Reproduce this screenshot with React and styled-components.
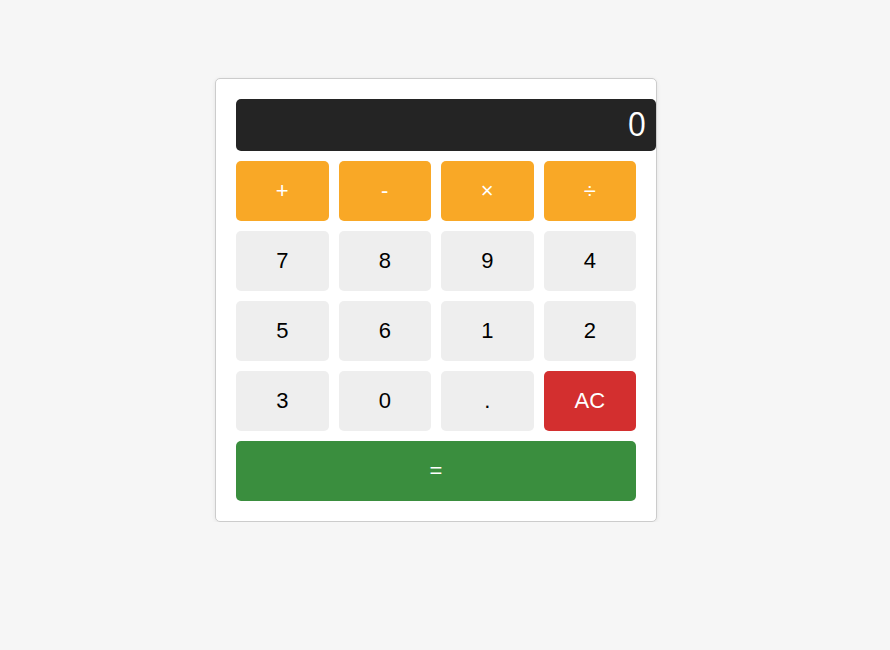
import React from 'react';
import styled, { createGlobalStyle } from "styled-components";

const Global = createGlobalStyle`
body {
  margin: 0;
  background-color: #f6f6f6;
  font-family: "Liberation Sans", Arial, sans-serif;
}
`
const Pagina = styled.div`
padding-top: 78px;
padding-left: 215px;
`
const Calculadora = styled.div`
width: 400px;
padding: 20px;
background-color: white;
border: 1px solid #cccccc;
border-radius: 5px;
box-shadow: 0 1px 4px rgba(0, 0, 0, 0.08);
`
const Visor = styled.div`
width: 100%;
height: 52px;
padding: 0 10px 4px 10px;
box-sizing: content-box;
height: 48px;
background-color: #242424;
color: white;
border-radius: 5px;
display: flex;
align-items: center;
justify-content: flex-end;
font-family: "Open Sans", sans-serif;
font-size: 32px;
margin-bottom: 10px;
`
const Teclado = styled.div`
display: grid;
grid-template-columns: repeat(4, 1fr);
gap: 10px;
`
const cores = {
  op: { fundo: "#f9a826", texto: "white" },
  num: { fundo: "#eeeeee", texto: "black" },
  limpar: { fundo: "#d32f2f", texto: "white" },
  igual: { fundo: "#3a8e3e", texto: "white" },
}
const Tecla = styled.button`
height: 60px;
border: none;
border-radius: 5px;
background-color: ${(p) => cores[p.$tipo].fundo};
color: ${(p) => cores[p.$tipo].texto};
font-family: "Liberation Sans", Arial, sans-serif;
font-size: 22px;
grid-column: ${(p) => (p.$largo ? "1 / -1" : "auto")};
cursor: pointer;
padding: 0;
`

const teclas = [
  ["+", "op"], ["-", "op"], ["×", "op"], ["÷", "op"],
  ["7", "num"], ["8", "num"], ["9", "num"], ["4", "num"],
  ["5", "num"], ["6", "num"], ["1", "num"], ["2", "num"],
  ["3", "num"], ["0", "num"], [".", "num"], ["AC", "limpar"],
]

export default class App extends React.Component {
  state = { valor: "0" }

  render() {
    return (
      <Pagina>
        <Global />
        <Calculadora>
          <Visor>{this.state.valor}</Visor>
          <Teclado>
            {teclas.map(([rotulo, tipo]) => (
              <Tecla key={rotulo} $tipo={tipo}>{rotulo}</Tecla>
            ))}
            <Tecla $tipo="igual" $largo>=</Tecla>
          </Teclado>
        </Calculadora>
      </Pagina>
    )
  }
}
